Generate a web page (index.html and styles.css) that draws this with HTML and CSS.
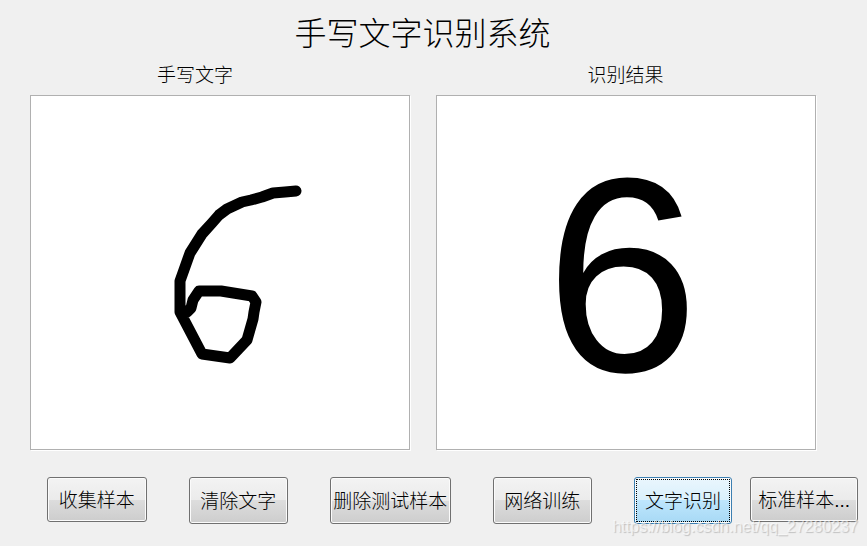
FILE: index.html
```html
<!DOCTYPE html>
<html lang="zh-CN">
<head>
  <meta charset="UTF-8" />
  <meta name="viewport" content="width=device-width, initial-scale=1.0"/>
  <title>手写文字识别系统</title>
  <link rel="stylesheet" href="styles.css">
</head>
<body>
  <h1>手写文字识别系统</h1>

  <main class="panels">
    <section class="panel">
      <h2>手写文字</h2>
      <div class="board">
        <svg class="drawing" viewBox="0 0 378 353" role="img" aria-label="6">
          <path d="M265 95 L254 96 L242 97 L231 101 L220 104 L211 106 L196 113 L188 119 L181 127 L171 138 L159 157 L154 171 L149 185 V216 L171 258 L199 262 L216 244 L222 223 L223 216 L225 206 L221 200 L190 195 H168 L162 204 L160 212 L156 216 L151 214"/>
        </svg>
      </div>
    </section>
    <section class="panel">
      <h2>识别结果</h2>
      <div class="board">
        <output class="result">6</output>
      </div>
    </section>
  </main>

  <div class="toolbar">
    <button class="btn" type="button">收集样本</button>
    <button class="btn tall" type="button">清除文字</button>
    <button class="btn tall wide" type="button">删除测试样本</button>
    <button class="btn tall" type="button">网络训练</button>
    <div class="group">
      <button class="btn tall active" type="button">文字识别</button>
      <button class="btn medium" type="button">标准样本...</button>
    </div>
  </div>

  <div class="watermark">https://blog.csdn.net/qq_27280237</div>
</body>
</html>
```

FILE: styles.css
```css
* {
  box-sizing: border-box;
}
body {
  position: relative;
  margin: 0;
  min-height: 100vh;
  background: #f0f0f0;
  color: #000;
  font-family: "Liberation Sans", "Noto Sans CJK SC", sans-serif;
}
h1 {
  margin: 0;
  padding: 14px 22px 0 0;
  font-size: 32px;
  line-height: 40px;
  font-weight: 300;
  text-align: center;
}
.panels {
  display: grid;
  grid-template-columns: 1fr 1fr;
  gap: 25px;
  padding: 10px 50px 0 30px;
}
h2 {
  margin: 0 0 7px;
  padding-right: 51px;
  font-size: 19px;
  line-height: 24px;
  font-weight: 300;
  text-align: center;
}
.panel:last-child h2 {
  padding-right: 2px;
}
.board {
  display: flex;
  justify-content: center;
  align-items: center;
  height: 355px;
  background: #fff;
  border: 1px solid #b0b0b0;
  margin-right: 1px;
  box-shadow: 1px 1px #fff;
}
.drawing {
  width: 100%;
  height: 100%;
}
.drawing path {
  fill: none;
  stroke: #000;
  stroke-width: 11;
  stroke-linecap: round;
  stroke-linejoin: round;
}
.result {
  padding: 6px 8px 0 0;
  font-size: 277px;
  line-height: 1;
}
.toolbar {
  display: flex;
  align-items: flex-start;
  gap: 42px;
  padding: 27px 9px 0 47px;
}
.btn {
  flex: 98 1 0;
  height: 45px;
  padding: 0 0 2px;
  border: 1px solid #707070;
  border-radius: 3px;
  background: linear-gradient(#f3f3f3, #ebebeb 50%, #dddddd 50%, #cdcdcd);
  box-shadow: inset 0 0 0 1px #fbfbfb;
  color: #000;
  font-family: inherit;
  font-size: 19px;
  font-weight: 300;
  white-space: nowrap;
}
.tall {
  height: 47px;
}
.wide {
  flex-grow: 119;
}
.medium {
  flex-grow: 108;
}
.group {
  display: flex;
  align-items: flex-start;
  flex: 225 1 0;
  gap: 18px;
}
.active {
  border-color: #3c7fb1;
  background: linear-gradient(#eaf6fd, #d9f0fc 50%, #bee6fd 50%, #a7d9f5);
  outline: 1px dotted #000;
  outline-offset: -3px;
}
.watermark {
  position: absolute;
  right: 9px;
  bottom: 10px;
  font-size: 16px;
  line-height: 18px;
  color: rgba(255, 255, 255, 0.6);
  text-shadow: 1px 1px 1px rgba(0, 0, 0, 0.2);
  pointer-events: none;
}
```
